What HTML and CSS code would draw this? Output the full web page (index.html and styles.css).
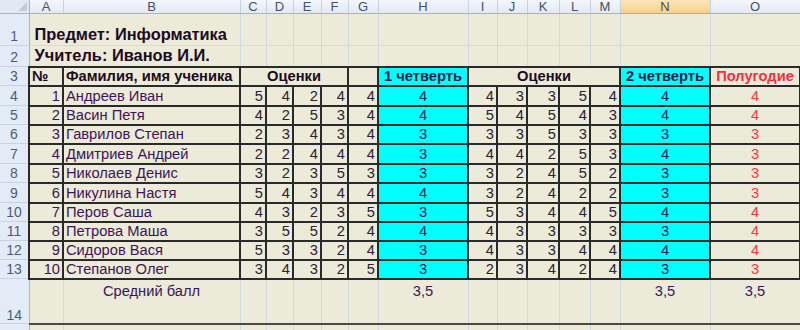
FILE: index.html
```html
<!DOCTYPE html>
<html lang="ru">
<head>
<meta charset="utf-8">
<title>Журнал</title>
<link rel="stylesheet" href="styles.css">
</head>
<body>
<table class="sheet">
<colgroup>
<col class="w-rh"><col class="w-a"><col class="w-b"><col class="w-c"><col class="w-d"><col class="w-e"><col class="w-f"><col class="w-g"><col class="w-h"><col class="w-i"><col class="w-j"><col class="w-k"><col class="w-l"><col class="w-m"><col class="w-n"><col class="w-o">
</colgroup>
<tr class="r-head">
<th class="corner"><span class="tri"></span></th>
<th class="ch"><div class="cl">A</div></th><th class="ch"><div class="cl">B</div></th><th class="ch"><div class="cl">C</div></th><th class="ch"><div class="cl">D</div></th><th class="ch"><div class="cl">E</div></th><th class="ch"><div class="cl">F</div></th><th class="ch"><div class="cl">G</div></th><th class="ch"><div class="cl">H</div></th><th class="ch"><div class="cl">I</div></th><th class="ch"><div class="cl">J</div></th><th class="ch"><div class="cl">K</div></th><th class="ch"><div class="cl">L</div></th><th class="ch"><div class="cl">M</div></th><th class="ch ch-sel"><div class="cl">N</div></th><th class="ch"><div class="cl">O</div></th>
</tr>
<tr class="r1">
<th class="rh">1</th><td class="title" colspan="2">Предмет: Информатика</td><td></td><td></td><td></td><td></td><td></td><td></td><td></td><td></td><td></td><td></td><td></td><td></td><td></td>
</tr>
<tr class="r2">
<th class="rh">2</th><td class="title" colspan="2">Учитель: Иванов И.И.</td><td></td><td></td><td></td><td></td><td></td><td></td><td></td><td></td><td></td><td></td><td></td><td></td><td></td>
</tr>
<tr class="r3 bd">
<th class="rh">3</th><td class="hd">№</td><td class="hd">Фамилия, имя ученика</td><td class="hd ctr" colspan="4">Оценки</td><td></td><td class="hd ctr q">1 четверть</td><td class="hd ctr" colspan="5">Оценки</td><td class="hd ctr q">2 четверть</td><td class="hd ctr red">Полугодие</td>
</tr>
<tr class="rt bd"><th class="rh">4</th><td class="num">1</td><td class="nm">Андреев Иван</td><td class="g">5</td><td class="g">4</td><td class="g">2</td><td class="g">4</td><td class="g">4</td><td class="q">4</td><td class="g">4</td><td class="g">3</td><td class="g">3</td><td class="g">5</td><td class="g">4</td><td class="q">4</td><td class="p">4</td></tr>
<tr class="rr bd"><th class="rh">5</th><td class="num">2</td><td class="nm">Васин Петя</td><td class="g">4</td><td class="g">2</td><td class="g">5</td><td class="g">3</td><td class="g">4</td><td class="q">4</td><td class="g">5</td><td class="g">4</td><td class="g">5</td><td class="g">4</td><td class="g">3</td><td class="q">4</td><td class="p">4</td></tr>
<tr class="rr bd"><th class="rh">6</th><td class="num">3</td><td class="nm">Гаврилов Степан</td><td class="g">2</td><td class="g">3</td><td class="g">4</td><td class="g">3</td><td class="g">4</td><td class="q">3</td><td class="g">3</td><td class="g">3</td><td class="g">5</td><td class="g">3</td><td class="g">3</td><td class="q">3</td><td class="p">3</td></tr>
<tr class="rt bd"><th class="rh">7</th><td class="num">4</td><td class="nm">Дмитриев Андрей</td><td class="g">2</td><td class="g">2</td><td class="g">4</td><td class="g">4</td><td class="g">4</td><td class="q">3</td><td class="g">4</td><td class="g">4</td><td class="g">2</td><td class="g">5</td><td class="g">3</td><td class="q">4</td><td class="p">3</td></tr>
<tr class="rr bd"><th class="rh">8</th><td class="num">5</td><td class="nm">Николаев Денис</td><td class="g">3</td><td class="g">2</td><td class="g">3</td><td class="g">5</td><td class="g">3</td><td class="q">3</td><td class="g">3</td><td class="g">2</td><td class="g">4</td><td class="g">5</td><td class="g">2</td><td class="q">3</td><td class="p">3</td></tr>
<tr class="rt bd"><th class="rh">9</th><td class="num">6</td><td class="nm">Никулина Настя</td><td class="g">5</td><td class="g">4</td><td class="g">3</td><td class="g">4</td><td class="g">4</td><td class="q">4</td><td class="g">3</td><td class="g">2</td><td class="g">4</td><td class="g">2</td><td class="g">2</td><td class="q">3</td><td class="p">3</td></tr>
<tr class="rr bd"><th class="rh">10</th><td class="num">7</td><td class="nm">Перов Саша</td><td class="g">4</td><td class="g">3</td><td class="g">2</td><td class="g">3</td><td class="g">5</td><td class="q">3</td><td class="g">5</td><td class="g">3</td><td class="g">4</td><td class="g">4</td><td class="g">5</td><td class="q">4</td><td class="p">4</td></tr>
<tr class="rr bd"><th class="rh">11</th><td class="num">8</td><td class="nm">Петрова Маша</td><td class="g">3</td><td class="g">5</td><td class="g">5</td><td class="g">2</td><td class="g">4</td><td class="q">4</td><td class="g">4</td><td class="g">3</td><td class="g">3</td><td class="g">3</td><td class="g">3</td><td class="q">3</td><td class="p">4</td></tr>
<tr class="rr bd"><th class="rh">12</th><td class="num">9</td><td class="nm">Сидоров Вася</td><td class="g">5</td><td class="g">3</td><td class="g">3</td><td class="g">2</td><td class="g">4</td><td class="q">3</td><td class="g">4</td><td class="g">3</td><td class="g">3</td><td class="g">4</td><td class="g">4</td><td class="q">4</td><td class="p">4</td></tr>
<tr class="rr bd"><th class="rh">13</th><td class="num">10</td><td class="nm">Степанов Олег</td><td class="g">3</td><td class="g">4</td><td class="g">3</td><td class="g">2</td><td class="g">5</td><td class="q">3</td><td class="g">2</td><td class="g">3</td><td class="g">4</td><td class="g">2</td><td class="g">4</td><td class="q">3</td><td class="p">3</td></tr>
<tr class="r14">
<th class="rh rh-bot">14</th><td></td><td class="avg">Средний балл</td><td></td><td></td><td></td><td></td><td></td><td class="avg">3,5</td><td></td><td></td><td></td><td></td><td></td><td class="avg">3,5</td><td class="avg">3,5</td>
</tr>
<tr class="r15">
<th class="rh"></th><td></td><td></td><td></td><td></td><td></td><td></td><td></td><td></td><td></td><td></td><td></td><td></td><td></td><td></td><td></td>
</tr>
</table>
</body>
</html>
```

FILE: styles.css
```css
html, body {
  margin: 0;
  padding: 0;
  background: #ecead9;
  overflow: hidden;
}

.sheet {
  table-layout: fixed;
  border-collapse: collapse;
  width: 800px;
  font-family: "Liberation Sans", Arial, sans-serif;
  font-size: 14.7px;
  color: #3a1655;
}

.w-rh { width: 29px; }
.w-a { width: 34px; }
.w-b { width: 177px; }
.w-c { width: 26px; }
.w-d { width: 27px; }
.w-e { width: 28px; }
.w-f { width: 27px; }
.w-g { width: 30px; }
.w-h { width: 90px; }
.w-i { width: 29px; }
.w-j { width: 30px; }
.w-k { width: 32px; }
.w-l { width: 31px; }
.w-m { width: 30px; }
.w-n { width: 90px; }
.w-o { width: 90px; }

td {
  padding: 0 2px 1px 2px;
  border: 1px solid #d3d9e3;
  vertical-align: bottom;
  white-space: nowrap;
  overflow: hidden;
  line-height: 16px;
}

/* column header row */
.r-head { height: 13px; }
.ch {
  padding: 0;
  height: 13px;
  background: linear-gradient(#f4f7fc, #e2e9f4);
  border-left: 1px solid #c6d2e2;
  border-right: 1px solid #c6d2e2;
  border-bottom: 1px solid #9eb6ce;
  font-weight: normal;
  color: #3e5269;
  font-size: 13px;
  overflow: hidden;
}
.cl {
  height: 13px;
  line-height: 16px;
  margin-top: -3px;
  text-align: center;
}
.ch-sel {
  background: linear-gradient(#fbe5b8, #f8d08a);
  border-bottom: 1px solid #f2a03a;
  color: #5b4a2a;
}
.corner {
  padding: 0;
  position: relative;
  background: #e2e9f4;
  border-right: 1px solid #9eb6ce;
  border-bottom: 1px solid #9eb6ce;
}
.tri {
  position: absolute;
  right: 2px;
  bottom: 2px;
  width: 0;
  height: 0;
  border-left: 9px solid transparent;
  border-bottom: 9px solid #c3ccd8;
}

/* row headers */
.rh {
  padding: 0 0 1px 0;
  background: #e3ebf6;
  border-right: 1px solid #9eb6ce;
  border-bottom: 1px solid #c5d3e5;
  color: #4a5e74;
  font-weight: normal;
  font-size: 14px;
  text-align: center;
  vertical-align: bottom;
  line-height: 16px;
}
.rh-bot { padding-bottom: 0; }

.r1 { height: 32px; }
.r2 { height: 21px; }
.r3 { height: 19px; }
.rr { height: 19px; }
.rt { height: 20px; }
.r14 { height: 45px; }
.r15 { height: 7px; }

.title {
  font-weight: bold;
  font-size: 16.4px;
  color: #1c0a20;
  padding-left: 5px;
  padding-bottom: 3px;
}

.bd td {
  border: 2px solid #2a2a2a;
}

.hd {
  font-weight: bold;
  color: #1c0a20;
}
.ctr { text-align: center; }
.red { color: #ff2b3a; }

.num { text-align: right; }
.nm { color: #3c1458; }
.g {
  text-align: right;
  color: #2a2232;
}
.q {
  background: #00ffff;
  text-align: center;
  color: #13224a;
}
.p {
  text-align: center;
  color: #ff3344;
}

.r14 td {
  vertical-align: top;
  padding-top: 3px;
}
.avg {
  text-align: center;
  color: #3a1655;
}

.r15 td {
  border-top: 2px solid #4a4a4a;
  background: #ecead9;
}
```
